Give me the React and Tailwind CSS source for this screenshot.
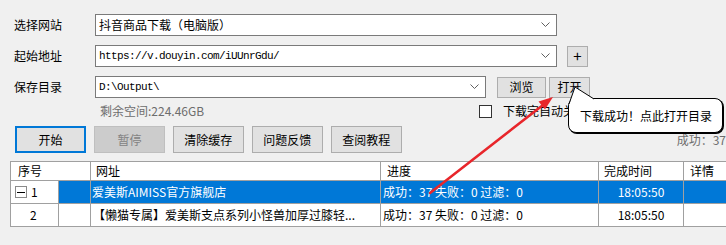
import React from 'react';

const cjk = "font-['Noto_Sans_CJK_SC',sans-serif]";
const mono = "font-['Liberation_Mono','Noto_Sans_CJK_SC',monospace]";

function Chevron() {
  return (
    <svg width="9" height="6" viewBox="0 0 9 6" className="shrink-0">
      <polyline points="0.5,0.5 4.5,4.5 8.5,0.5" fill="none" stroke="#606060" strokeWidth="1" />
    </svg>
  );
}

function Combo({ width, children, textClass }) {
  return (
    <div className={`h-[22px] ${width} bg-white border border-[#7a7a7a] flex items-center pl-[3px] pr-[6px]`}>
      <span className={`flex-1 whitespace-nowrap ${textClass}`}>{children}</span>
      <Chevron />
    </div>
  );
}

function Btn({ width, height = 'h-[21px]', children, variant, textSize = 'text-[12px]' }) {
  const base = `flex items-center justify-center ${textSize} leading-[14px]`;
  const look =
    variant === 'focus'
      ? 'bg-[#e1e1e1] border-2 border-[#0078d7] text-black'
      : variant === 'disabled'
      ? 'bg-[#cccccc] border border-[#bfbfbf] text-[#838383]'
      : 'bg-[#e1e1e1] border border-[#adadad] text-black';
  return <div className={`${base} ${look} ${width} ${height}`}>{children}</div>;
}

function Row({ label, children, className = '' }) {
  return (
    <div className={`flex items-center h-[22px] ${className}`}>
      <div className="w-[95px] pl-[14px] text-[12px] leading-[14px]">{label}</div>
      {children}
    </div>
  );
}

function Cell({ children, className = '' }) {
  return (
    <div className={`bg-white flex items-center whitespace-nowrap overflow-hidden text-[12px] leading-[14px] ${className}`}>
      {children}
    </div>
  );
}

function Sel({ children, className = '' }) {
  return <Cell className={`!bg-[#0078d7] text-white ${className}`}>{children}</Cell>;
}

export default function App() {
  return (
    <div className={`relative w-[726px] h-[245px] overflow-hidden bg-[#f0f0f0] text-black ${cjk}`}>
      <div className="flex flex-col pt-[14px]">
        <Row label="选择网站">
          <Combo width="w-[462px]" textClass="text-[12px] leading-[14px]">抖音商品下载（电脑版）</Combo>
        </Row>

        <Row label="起始地址" className="mt-[9px]">
          <Combo width="w-[462px]" textClass={`${mono} text-[11px] tracking-[-0.6px] leading-[14px]`}>
            https://v.douyin.com/iUUnrGdu/
          </Combo>
          <div className="ml-[10px]">
            <Btn width="w-[21px]" textSize="text-[15px]">+</Btn>
          </div>
        </Row>

        <Row label="保存目录" className="mt-[9px]">
          <Combo width="w-[391px]" textClass={`${mono} text-[11px] tracking-[-0.6px] leading-[14px]`}>
            D:\Output\
          </Combo>
          <div className="ml-[11px] flex gap-[3px]">
            <Btn width="w-[49px]">浏览</Btn>
            <Btn width="w-[41px]">打开</Btn>
          </div>
        </Row>

        <div className="flex items-center h-[16px] mt-[5px]">
          <div className="w-[100px]" />
          <div className="w-[379px] text-[12px] leading-[14px] text-[#6d6d6d]">剩余空间:224.46GB</div>
          <div className="w-[13px] h-[13px] bg-white border border-[#333333]" />
          <div className="ml-[11px] text-[12px] leading-[14px] whitespace-nowrap">下载完自动关机</div>
        </div>

        <div className="flex items-center h-[27px] mt-[7px] pl-[15px] gap-[8px]">
          <Btn width="w-[72px]" height="h-[27px]" variant="focus">开始</Btn>
          <Btn width="w-[72px]" height="h-[27px]" variant="disabled">暂停</Btn>
          <Btn width="w-[72px]" height="h-[27px]">清除缓存</Btn>
          <Btn width="w-[72px]" height="h-[27px]">问题反馈</Btn>
          <Btn width="w-[72px]" height="h-[27px]">查阅教程</Btn>
          <div className="ml-[267px] text-[12px] leading-[14px] text-[#6d6d6d] whitespace-nowrap">成功：37</div>
        </div>

        <div className="mt-[8px] ml-[10px] w-[760px] border border-[#a0a0a0] bg-[#a0a0a0] grid gap-px grid-cols-[47px_31px_289px_217px_84px_60px] grid-rows-[18px_22px_22px]">
          <Cell className="col-span-2 pl-[7px]">序号</Cell>
          <Cell className="pl-[5px]">网址</Cell>
          <Cell className="pl-[6px]">进度</Cell>
          <Cell className="pl-[5px]">完成时间</Cell>
          <Cell className="pl-[6px]">详情</Cell>

          <Cell className="pl-[4px] gap-[4px]">
            <span className="w-[12px] h-[12px] border border-[#8a8a8a] flex items-center justify-center">
              <span className="block w-[8px] h-px bg-black" />
            </span>
            <span>1</span>
          </Cell>
          <Sel />
          <Sel className="pl-[1px]">爱美斯AIMISS官方旗舰店</Sel>
          <Sel className="pl-[2px]">成功：37 失败：0 过滤：0</Sel>
          <Sel className="justify-center">18:05:50</Sel>
          <Sel />

          <Cell className="pl-[19px]">2</Cell>
          <Cell />
          <Cell className="pl-[2px]">【懒猫专属】爱美斯支点系列小怪兽加厚过膝轻...</Cell>
          <Cell className="pl-[2px]">成功：37 失败：0 过滤：0</Cell>
          <Cell className="justify-center">18:05:50</Cell>
          <Cell />
        </div>
      </div>

      {/* balloon tip */}
      <div className="absolute left-[568px] top-[98px] w-[155px] h-[35px] bg-white border border-black rounded-[8px] shadow-[1px_1px_0_0_#000] flex items-center pl-[11px] text-[12px] leading-[14px] whitespace-nowrap">
        下载成功！点此打开目录
      </div>
      <svg className="absolute left-0 top-0 pointer-events-none" width="726" height="245">
        <polygon points="575,87 594,99 569,105" fill="#ffffff" />
        <line x1="575" y1="87" x2="594" y2="99" stroke="#000" strokeWidth="1" />
        <line x1="575" y1="87" x2="569" y2="104" stroke="#000" strokeWidth="1" />
      </svg>

      {/* red arrow */}
      <svg className="absolute left-0 top-0 pointer-events-none" width="726" height="245">
        <line x1="430" y1="193" x2="543" y2="105" stroke="#e8262b" strokeWidth="2.5" strokeLinecap="round" />
        <polygon points="553,97 545,109.5 538.5,101.5" fill="#e8262b" />
      </svg>
    </div>
  );
}
